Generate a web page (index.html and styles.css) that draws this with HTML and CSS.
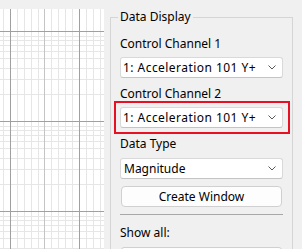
FILE: index.html
```html
<!DOCTYPE html>
<html>
<head>
<meta charset="utf-8">
<link rel="stylesheet" href="styles.css">
</head>
<body>
<div class="app">
  <div class="plot">
    <svg class="grid" width="104" height="240" viewBox="0 0 104 240" shape-rendering="crispEdges">
      <g class="minor">
        <line x1="3.5" y1="0" x2="3.5" y2="240"/>
        <line x1="17.5" y1="0" x2="17.5" y2="240"/>
        <line x1="24.5" y1="0" x2="24.5" y2="240"/>
        <line x1="31.5" y1="0" x2="31.5" y2="240"/>
        <line x1="38.5" y1="0" x2="38.5" y2="240"/>
        <line x1="51.5" y1="0" x2="51.5" y2="240"/>
        <line x1="58.5" y1="0" x2="58.5" y2="240"/>
        <line x1="65.5" y1="0" x2="65.5" y2="240"/>
        <line x1="72.5" y1="0" x2="72.5" y2="240"/>
        <line x1="86.5" y1="0" x2="86.5" y2="240"/>
        <line x1="93.5" y1="0" x2="93.5" y2="240"/>
        <line x1="100.5" y1="0" x2="100.5" y2="240"/>
        <line x1="0" y1="27.5" x2="104" y2="27.5"/>
        <line x1="0" y1="31.5" x2="104" y2="31.5"/>
        <line x1="0" y1="36.5" x2="104" y2="36.5"/>
        <line x1="0" y1="42.5" x2="104" y2="42.5"/>
        <line x1="0" y1="49.5" x2="104" y2="49.5"/>
        <line x1="0" y1="59.5" x2="104" y2="59.5"/>
        <line x1="0" y1="70.5" x2="104" y2="70.5"/>
        <line x1="0" y1="85.5" x2="104" y2="85.5"/>
        <line x1="0" y1="117.5" x2="104" y2="117.5"/>
        <line x1="0" y1="121.5" x2="104" y2="121.5"/>
        <line x1="0" y1="126.5" x2="104" y2="126.5"/>
        <line x1="0" y1="132.5" x2="104" y2="132.5"/>
        <line x1="0" y1="139.5" x2="104" y2="139.5"/>
        <line x1="0" y1="149.5" x2="104" y2="149.5"/>
        <line x1="0" y1="160.5" x2="104" y2="160.5"/>
        <line x1="0" y1="175.5" x2="104" y2="175.5"/>
        <line x1="0" y1="207.5" x2="104" y2="207.5"/>
        <line x1="0" y1="211.5" x2="104" y2="211.5"/>
        <line x1="0" y1="216.5" x2="104" y2="216.5"/>
        <line x1="0" y1="222.5" x2="104" y2="222.5"/>
        <line x1="0" y1="229.5" x2="104" y2="229.5"/>
        <line x1="0" y1="239.5" x2="104" y2="239.5"/>
      </g>
      <g class="mid">
        <line x1="44.5" y1="0" x2="44.5" y2="240"/>
      </g>
      <g class="major">
        <line x1="0" y1="22.5" x2="104" y2="22.5"/>
        <line x1="0" y1="112.5" x2="104" y2="112.5"/>
        <line x1="0" y1="202.5" x2="104" y2="202.5"/>
        <line x1="10.5" y1="0" x2="10.5" y2="240"/>
        <line x1="79.5" y1="0" x2="79.5" y2="240"/>
      </g>
    </svg>
  </div>
  <div class="panel">
    <fieldset class="group">
      <legend class="group-title">Data Display</legend>
      <div class="label">Control Channel 1</div>
      <div class="combo">
        <span class="combo-text wide">1: Acceleration 101 Y+</span>
        <svg class="chev" width="8" height="5" viewBox="0 0 8 5"><path d="M0.5 0.5 L4 4 L7.5 0.5" fill="none" stroke="#5a5a5a" stroke-width="1"/></svg>
      </div>
      <div class="label">Control Channel 2</div>
      <div class="highlight-wrap">
        <div class="combo">
          <span class="combo-text wide">1: Acceleration 101 Y+</span>
          <svg class="chev" width="8" height="5" viewBox="0 0 8 5"><path d="M0.5 0.5 L4 4 L7.5 0.5" fill="none" stroke="#5a5a5a" stroke-width="1"/></svg>
        </div>
        <div class="highlight"></div>
      </div>
      <div class="label">Data Type</div>
      <div class="combo combo-type">
        <span class="combo-text">Magnitude</span>
        <svg class="chev" width="8" height="5" viewBox="0 0 8 5"><path d="M0.5 0.5 L4 4 L7.5 0.5" fill="none" stroke="#5a5a5a" stroke-width="1"/></svg>
      </div>
      <div class="button">Create Window</div>
      <div class="sep"></div>
      <div class="label label-show">Show all:</div>
      <div class="combo combo-cut"></div>
    </fieldset>
  </div>
</div>
</body>
</html>
```

FILE: styles.css
```css
html, body {
  margin: 0;
  padding: 0;
  background: #f0f0f0;
  width: 302px;
  height: 249px;
  overflow: hidden;
  font-family: "Noto Sans", "Open Sans", sans-serif;
  font-size: 12px;
  color: #000;
}

.app {
  display: flex;
  height: 249px;
}

.plot {
  width: 104px;
  flex: none;
  padding-top: 9px;
}

.grid {
  display: block;
  background: #fff;
}

.grid .minor line { stroke: #e6e6e6; stroke-width: 1; }
.grid .mid line { stroke: #c4c4c4; stroke-width: 1; }
.grid .major line { stroke: #a0a0a0; stroke-width: 1; }

.panel {
  flex: 1;
  padding: 9px 9px 0 6px;
  height: 240px;
}

.group {
  margin: 0;
  width: 183px;
  height: 240px;
  box-sizing: border-box;
  border: 1px solid #d5d5d5;
  border-bottom: none;
  padding: 10px 9px 0 9px;
  overflow: hidden;
}

.group-title {
  padding: 0 2px;
  margin-left: -2px;
  line-height: 16px;
}

.label {
  line-height: 17px;
  height: 16px;
  white-space: nowrap;
}

.combo {
  box-sizing: border-box;
  height: 21px;
  width: 163px;
  margin: 6px 0 7px 0;
  background: #fff;
  border: 1px solid #d9d9d9;
  border-bottom-color: #c4c4c4;
  border-radius: 3px;
  display: flex;
  align-items: center;
  justify-content: space-between;
  padding: 0 6px 0 2px;
}

.combo-type {
  margin-top: 7px;
  padding-left: 3px;
}

.combo-text {
  line-height: 19px;
  white-space: nowrap;
}

.combo-text.wide {
  letter-spacing: 0.45px;
}

.chev {
  display: block;
  flex: none;
}

.highlight-wrap {
  position: relative;
}

.highlight {
  position: absolute;
  top: -6px;
  left: -6px;
  right: -7px;
  bottom: -6px;
  border: 2px solid #e81123;
}

.button {
  box-sizing: border-box;
  height: 21px;
  width: 161px;
  margin: 0 1px;
  background: #fdfdfd;
  border: 1px solid #d0d0d0;
  border-radius: 4px;
  text-align: center;
  line-height: 19px;
}

.sep {
  height: 1px;
  width: 163px;
  background: #a8a8a8;
  margin-top: 7px;
}

.label-show {
  margin-top: 9px;
}

.combo-cut {
  margin-top: 7px;
  margin-left: 1px;
  width: 161px;
  background: #fdfdfd;
  border-color: #d0d0d0;
}
```
